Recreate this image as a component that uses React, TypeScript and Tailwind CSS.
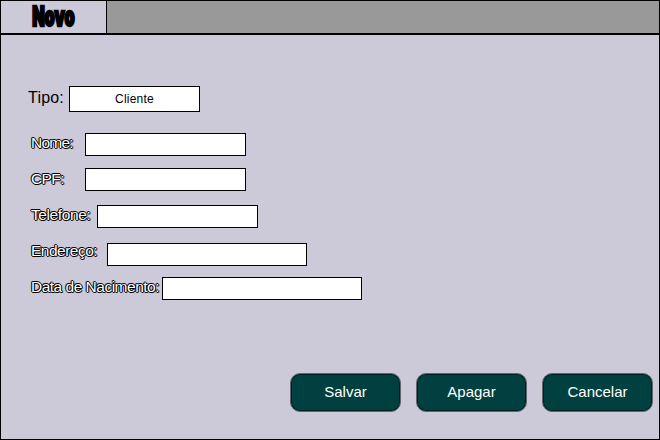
import React from "react";

const outline =
  "text-white [text-shadow:1px_0_0_#000,-1px_0_0_#000,0_1px_0_#000,0_-1px_0_#000,1px_1px_0_#0008,-1px_-1px_0_#0008]";

type FieldProps = { label: string; row: string; labelBox: string; input: string; spacing: string };

function Field({ label, row, labelBox, input, spacing }: FieldProps) {
  return (
    <div className={`flex items-start h-[23px] ${row}`}>
      <label className={`shrink-0 pl-[30px] whitespace-nowrap text-[15.5px] ${outline} ${labelBox} ${spacing}`}>
        {label}
      </label>
      <input className={`block h-[23px] shrink-0 border border-black bg-white px-1 text-sm outline-none ${input}`} />
    </div>
  );
}

function Button({ children }: { children: React.ReactNode }) {
  return (
    <button className="h-[39px] w-[111px] rounded-[10px] border border-[#64646c] bg-[#004040] pb-px text-center text-[15px] leading-[20px] text-white shadow-[inset_0_0_0_1px_#002020]">
      {children}
    </button>
  );
}

export default function App() {
  return (
    <main className="flex h-[440px] w-[660px] flex-col overflow-hidden border border-black bg-[#cccad9] font-['Liberation_Sans',Arial,sans-serif] text-black">
      <header className="flex h-[34px] shrink-0 border-b-2 border-black bg-[#999999]">
        <div className="flex h-[32px] w-[106px] items-center justify-center border-r border-black bg-[#cccad9]">
          <h1 className="scale-x-[0.6] font-['Inter',sans-serif] text-[27px] leading-[32px] font-black tracking-[0px] [-webkit-text-stroke:2.6px_#000]">
            Novo
          </h1>
        </div>
      </header>
      <form className="flex flex-col">
        <div className="mt-[51px] flex h-[26px]">
          <span className="w-[68px] shrink-0 pl-[27px] text-[16px] leading-[24px] tracking-[0.2px] whitespace-nowrap">Tipo:</span>
          <div className="h-[26px] w-[131px] border border-black bg-white text-center text-[12px] leading-[25px] tracking-[0.2px]">Cliente</div>
        </div>
        <Field label="Nome:" row="mt-[21px]" labelBox="w-[84px] leading-[20px]" input="w-[161px]" spacing="tracking-[-0.75px]" />
        <Field label="CPF:" row="mt-[12px]" labelBox="w-[84px] leading-[22px]" input="w-[161px]" spacing="tracking-[-0.6px]" />
        <Field label="Telefone:" row="mt-[14px]" labelBox="w-[96px] leading-[20px]" input="w-[161px]" spacing="tracking-[-0.4px]" />
        <Field label="Endereço:" row="mt-[15px]" labelBox="w-[106px] -mt-[2px] leading-[20px]" input="w-[200px]" spacing="tracking-[-0.5px]" />
        <Field label="Data de Nacimento:" row="mt-[11px]" labelBox="w-[161px] leading-[20px]" input="w-[200px]" spacing="tracking-[-0.5px]" />
      </form>
      <footer className="mt-[73px] ml-[289px] flex gap-[15px]">
        <Button>Salvar</Button>
        <Button>Apagar</Button>
        <Button>Cancelar</Button>
      </footer>
    </main>
  );
}
